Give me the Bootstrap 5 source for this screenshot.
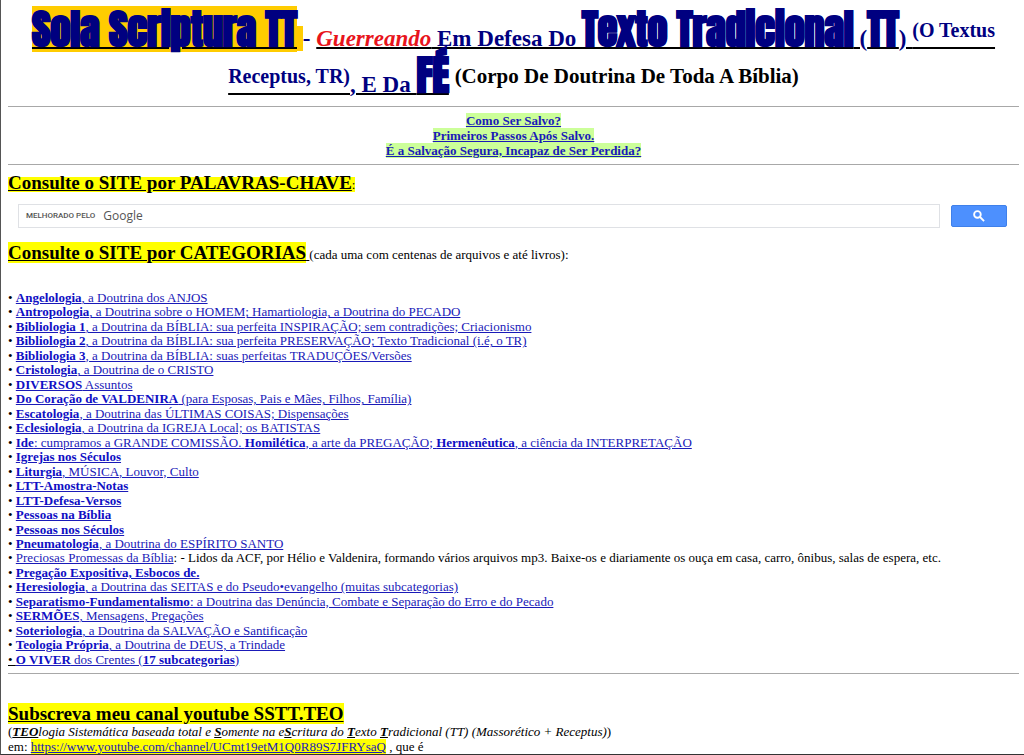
<!DOCTYPE html>
<html lang="pt-BR">
<head>
<meta charset="utf-8">
<meta name="viewport" content="width=device-width, initial-scale=1">
<title>Sola Scriptura TT</title>
<link href="https://cdn.jsdelivr.net/npm/bootstrap@5.3.0/dist/css/bootstrap.min.css" rel="stylesheet">
<style>
  body { font-family: "Liberation Serif", "Times New Roman", serif; font-size: 13px; line-height: 14px; color: #000; background: #fff; }
  .page { border-left: 1px solid #555; border-bottom: 1px solid #333; padding: 6px 5px 0 7px; }
  a { color: #1a1ab8; text-underline-offset: 1px; }
  a b { color: #0f0fc4; }
  b { font-weight: 700; }
  hr { margin: 0; border-top: 1px solid #a8a8a8; opacity: 1; }
  .masthead { font-size: 23px; line-height: 20px; font-weight: 700; color: #000080; padding: 0 8px; }
  .masthead { padding-bottom: 8px; }
  .line { text-decoration: underline; text-decoration-color: #000; text-decoration-thickness: 2px; text-underline-offset: 1px; }
  .poster { font-family: Impact, Anton, "Liberation Sans", sans-serif; font-size: 40px; line-height: 46px; -webkit-text-stroke: 1px #000080; }
  .gold { background: #fc0; }
  .raised { font-size: 20px; vertical-align: 9px; }
  .raised-lg { font-size: 21px; vertical-align: 9px; color: #000; }
  .guerra { color: #e8141c; }
  .salvo { line-height: 15px; padding: 6px 0; }
  .salvo a { background: #cf9; }
  .section-title { font-size: 19px; line-height: 20px; font-weight: 700; }
  .yellow { background: #ff0; }
  .search-row { gap: 11px; padding: 11px 12px 7px 10px; }
  .search-box { border: 1px solid #dfe1e5; height: 24px; padding: 0 7px; }
  .search-box label { font: 500 8px/22px Roboto, sans-serif; color: #555; }
  .search-box label span { font: 500 12px/20px "Open Sans", sans-serif; color: #555; }
  .search-box input { font-size: 13px; min-width: 0; }
  .search-btn { width: 56px; height: 22px; background: #4d90fe; border: 1px solid #3f80ea; border-radius: 2px; }
  .topics { min-height: 376px; margin: 28px 0 6px; }
  .channel { padding-top: 30px; line-height: 15px; }
</style>
</head>
<body>
<main class="page">
  <h1 class="masthead text-center mb-0"><span class="poster gold line d-inline-block">Sola Scriptura TT</span><span class="gold"> </span> - <span class="line"><i class="guerra">Guerreando</i> Em Defesa Do <span class="poster">Texto Tradicional</span> (<span class="poster">TT</span>) <span class="raised">(O Textus Receptus, TR)</span>, E Da <span class="poster">FÉ</span></span> <span class="raised-lg">(Corpo De Doutrina De Toda A Bíblia)</span></h1>
  <hr>
  <nav class="salvo text-center fw-bold">
    <a href="#">Como Ser Salvo?</a><br>
    <a href="#">Primeiros Passos Após Salvo.</a><br>
    <a href="#">É a Salvação Segura, Incapaz de Ser Perdida?</a>
  </nav>
  <hr>
  <div class="pt-2"><span class="yellow"><u class="section-title">Consulte o SITE por PALAVRAS-CHAVE</u>:</span></div>
  <form class="search-row d-flex align-items-center">
    <div class="search-box d-flex align-items-center flex-grow-1">
      <label for="busca" class="text-nowrap d-flex align-items-center">MELHORADO PELO <span class="ms-2">Google</span></label>
      <input id="busca" type="text" class="border-0 flex-grow-1">
    </div>
    <button type="button" class="search-btn d-flex align-items-center justify-content-center p-0" aria-label="Pesquisar">
      <svg width="12" height="12" viewBox="0 0 13 13" fill="none" stroke="#fff" stroke-width="2"><circle cx="4.8" cy="4.8" r="3.6"/><path d="M7.6 7.6 12 12"/></svg>
    </button>
  </form>
  <div class="pt-2"><u><span class="section-title yellow">Consulte o SITE por CATEGORIAS</span> </u>(cada uma com centenas de arquivos e até livros):</div>
  <ul class="topics list-unstyled d-flex flex-column justify-content-between">
    <li>• <a href="#"><b>Angelologia</b>, a Doutrina dos ANJOS</a></li>
    <li>• <a href="#"><b>Antropologia</b>, a Doutrina sobre o HOMEM; Hamartiologia, a Doutrina do PECADO</a></li>
    <li>• <a href="#"><b>Bibliologia 1</b>, a Doutrina da BÍBLIA: sua perfeita INSPIRAÇÃO; sem contradições; Criacionismo</a></li>
    <li>• <a href="#"><b>Bibliologia 2</b>, a Doutrina da BÍBLIA: sua perfeita PRESERVAÇÃO; Texto Tradicional (i.é, o TR)</a></li>
    <li>• <a href="#"><b>Bibliologia 3</b>, a Doutrina da BÍBLIA: suas perfeitas TRADUÇÕES/Versões</a></li>
    <li>• <a href="#"><b>Cristologia</b>, a Doutrina de o CRISTO</a></li>
    <li>• <a href="#"><b>DIVERSOS</b> Assuntos</a></li>
    <li>• <a href="#"><b>Do Coração de VALDENIRA</b> (para Esposas, Pais e Mães, Filhos, Família)</a></li>
    <li>• <a href="#"><b>Escatologia</b>, a Doutrina das ÚLTIMAS COISAS; Dispensações</a></li>
    <li>• <a href="#"><b>Eclesiologia</b>, a Doutrina da IGREJA Local; os BATISTAS</a></li>
    <li>• <a href="#"><b>Ide</b>: cumpramos a GRANDE COMISSÃO. <b>Homilética</b>, a arte da PREGAÇÃO; <b>Hermenêutica</b>, a ciência da INTERPRETAÇÃO</a></li>
    <li>• <a href="#"><b>Igrejas nos Séculos</b></a></li>
    <li>• <a href="#"><b>Liturgia</b>, MÚSICA, Louvor, Culto</a></li>
    <li>• <a href="#"><b>LTT-Amostra-Notas</b></a></li>
    <li>• <a href="#"><b>LTT-Defesa-Versos</b></a></li>
    <li>• <a href="#"><b>Pessoas na Bíblia</b></a></li>
    <li>• <a href="#"><b>Pessoas nos Séculos</b></a></li>
    <li>• <a href="#"><b>Pneumatologia</b>, a Doutrina do ESPÍRITO SANTO</a></li>
    <li>• <a href="#">Preciosas Promessas da Bíblia</a>: - Lidos da ACF, por Hélio e Valdenira, formando vários arquivos mp3. Baixe-os e diariamente os ouça em casa, carro, ônibus, salas de espera, etc.</li>
    <li>• <a href="#"><b>Pregação Expositiva, Esbocos de.</b></a></li>
    <li>• <a href="#"><b>Heresiologia</b>, a Doutrina das SEITAS e do Pseudo•evangelho (muitas subcategorias)</a></li>
    <li>• <a href="#"><b>Separatismo-Fundamentalismo</b>: a Doutrina das Denúncia, Combate e Separação do Erro e do Pecado</a></li>
    <li>• <a href="#"><b>SERMÕES</b>, Mensagens, Pregações</a></li>
    <li>• <a href="#"><b>Soteriologia</b>, a Doutrina da SALVAÇÃO e Santificação</a></li>
    <li>• <a href="#"><b>Teologia Própria</b>, a Doutrina de DEUS, a Trindade</a></li>
    <li><u>• </u><a href="#"><b>O VIVER</b> dos Crentes (<b>17 subcategorias</b>)</a></li>
  </ul>
  <hr>
  <section class="channel">
    <div><u class="section-title yellow">Subscreva meu canal youtube SSTT.TEO</u></div>
    <div>(<i><b><u>TEO</u></b>logia Sistemática baseada total e <b><u>S</u></b>omente na e<b><u>S</u></b>critura do <b><u>T</u></b>exto <b><u>T</u></b>radicional (TT) (Massorético + Receptus)</i>)</div>
    <div>em: <a href="#" class="yellow">https://www.youtube.com/channel/UCmt19etM1Q0R89S7JFRYsaQ</a> , que é</div>
  </section>
</main>
<script src="https://cdn.jsdelivr.net/npm/bootstrap@5.3.0/dist/js/bootstrap.bundle.min.js"></script>
</body>
</html>
